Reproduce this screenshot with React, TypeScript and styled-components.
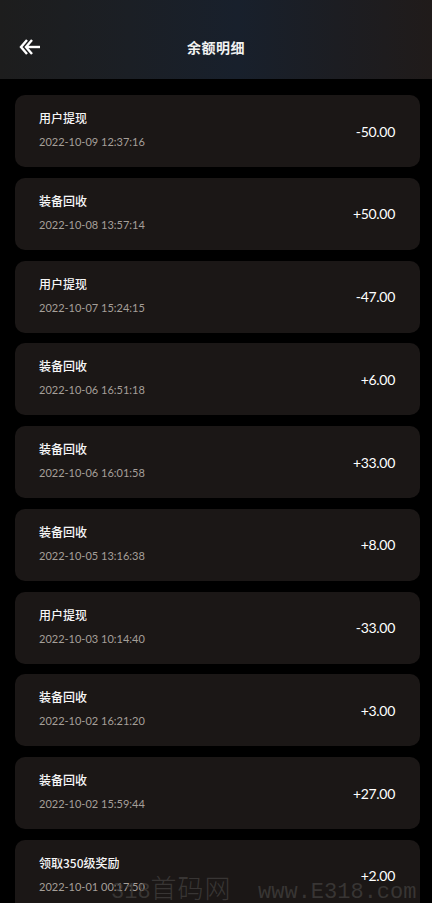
import React from "react";
import styled, { createGlobalStyle } from "styled-components";

interface Record {
  title: string;
  time: string;
  amount: string;
}

const records: Record[] = [
  { title: "用户提现", time: "2022-10-09 12:37:16", amount: "-50.00" },
  { title: "装备回收", time: "2022-10-08 13:57:14", amount: "+50.00" },
  { title: "用户提现", time: "2022-10-07 15:24:15", amount: "-47.00" },
  { title: "装备回收", time: "2022-10-06 16:51:18", amount: "+6.00" },
  { title: "装备回收", time: "2022-10-06 16:01:58", amount: "+33.00" },
  { title: "装备回收", time: "2022-10-05 13:16:38", amount: "+8.00" },
  { title: "用户提现", time: "2022-10-03 10:14:40", amount: "-33.00" },
  { title: "装备回收", time: "2022-10-02 16:21:20", amount: "+3.00" },
  { title: "装备回收", time: "2022-10-02 15:59:44", amount: "+27.00" },
  { title: "领取350级奖励", time: "2022-10-01 00:17:50", amount: "+2.00" }
];

const GlobalStyle = createGlobalStyle`
  html, body {
    margin: 0;
    padding: 0;
    background: #000;
    font-family: "Noto Sans CJK SC", "Lato", sans-serif;
  }
`;

const Page = styled.div`
  width: 432px;
  height: 903px;
  overflow: hidden;
  background: #000;
  position: relative;
`;

// top bar with the dark bluish glow
const Header = styled.header`
  height: 79px;
  display: flex;
  align-items: center;
  justify-content: center;
  position: relative;
  background: linear-gradient(
    90deg,
    #1d1d1d 0%,
    #1b1f25 30%,
    #18202c 55%,
    #1c1d22 78%,
    #201b1a 100%
  );
`;

const BackButton = styled.div`
  position: absolute;
  left: 19px;
  top: 38px;
  width: 22px;
  height: 18px;
  display: flex;
`;

const Title = styled.h1`
  margin: 0;
  padding-top: 14px;
  font-size: 14px;
  font-weight: 700;
  color: #f2f2f2;
  letter-spacing: 0.5px;
`;

const List = styled.div`
  display: flex;
  flex-direction: column;
  gap: 10.75px;
  padding: 16px 12px 0 15px;
`;

const Card = styled.div`
  height: 72px;
  border-radius: 10px;
  background: #1b1716;
  display: flex;
  align-items: center;
  justify-content: space-between;
  padding: 0 25px 0 24px;
`;

const Info = styled.div`
  display: flex;
  flex-direction: column;
  gap: 7px;
  padding-bottom: 3px;
`;

const ItemTitle = styled.div`
  font-size: 12px;
  font-weight: 500;
  color: #f6f6f6;
  line-height: 18px;
`;

const ItemTime = styled.div`
  font-family: "Lato", "Noto Sans", sans-serif;
  font-size: 11px;
  color: #a59f99;
  line-height: 16px;
`;

const Amount = styled.div`
  font-family: "Lato", "Noto Sans", sans-serif;
  font-size: 14px;
  color: #ffffff;
  letter-spacing: -0.3px;
`;

// site watermark stamped over the bottom of the shot
const Watermark = styled.div`
  position: absolute;
  left: 111px;
  top: 872px;
  width: 309px;
  overflow: hidden;
  white-space: nowrap;
  line-height: 30px;
  color: rgba(66, 64, 62, 0.75);
  pointer-events: none;
`;

const MarkLatin = styled.span`
  font-family: "Liberation Mono", monospace;
  font-size: 22px;
`;

const MarkCjk = styled.span`
  font-family: "Noto Sans CJK SC", sans-serif;
  font-weight: 300;
  font-size: 26px;
  letter-spacing: 1px;
`;

const BackIcon = () => (
  <svg width="22" height="18" viewBox="0 0 22 18">
    <path d="M8 2 L2 9 L8 16" fill="none" stroke="#fff" strokeWidth="2.4" />
    <path d="M13 2 L7 9 L13 16" fill="none" stroke="#fff" strokeWidth="2.4" />
    <path d="M8 9 H21" stroke="#fff" strokeWidth="2.4" />
  </svg>
);

export default function App() {
  return (
    <Page>
      <GlobalStyle />
      <Header>
        <BackButton>
          <BackIcon />
        </BackButton>
        <Title>余额明细</Title>
      </Header>
      <List>
        {records.map((r, i) => (
          <Card key={i}>
            <Info>
              <ItemTitle>{r.title}</ItemTitle>
              <ItemTime>{r.time}</ItemTime>
            </Info>
            <Amount>{r.amount}</Amount>
          </Card>
        ))}
      </List>
      <Watermark>
        <MarkLatin>318</MarkLatin>
        <MarkCjk>首码网</MarkCjk>
        <MarkLatin>{"\u00a0\u00a0www.E318.com"}</MarkLatin>
      </Watermark>
    </Page>
  );
}
